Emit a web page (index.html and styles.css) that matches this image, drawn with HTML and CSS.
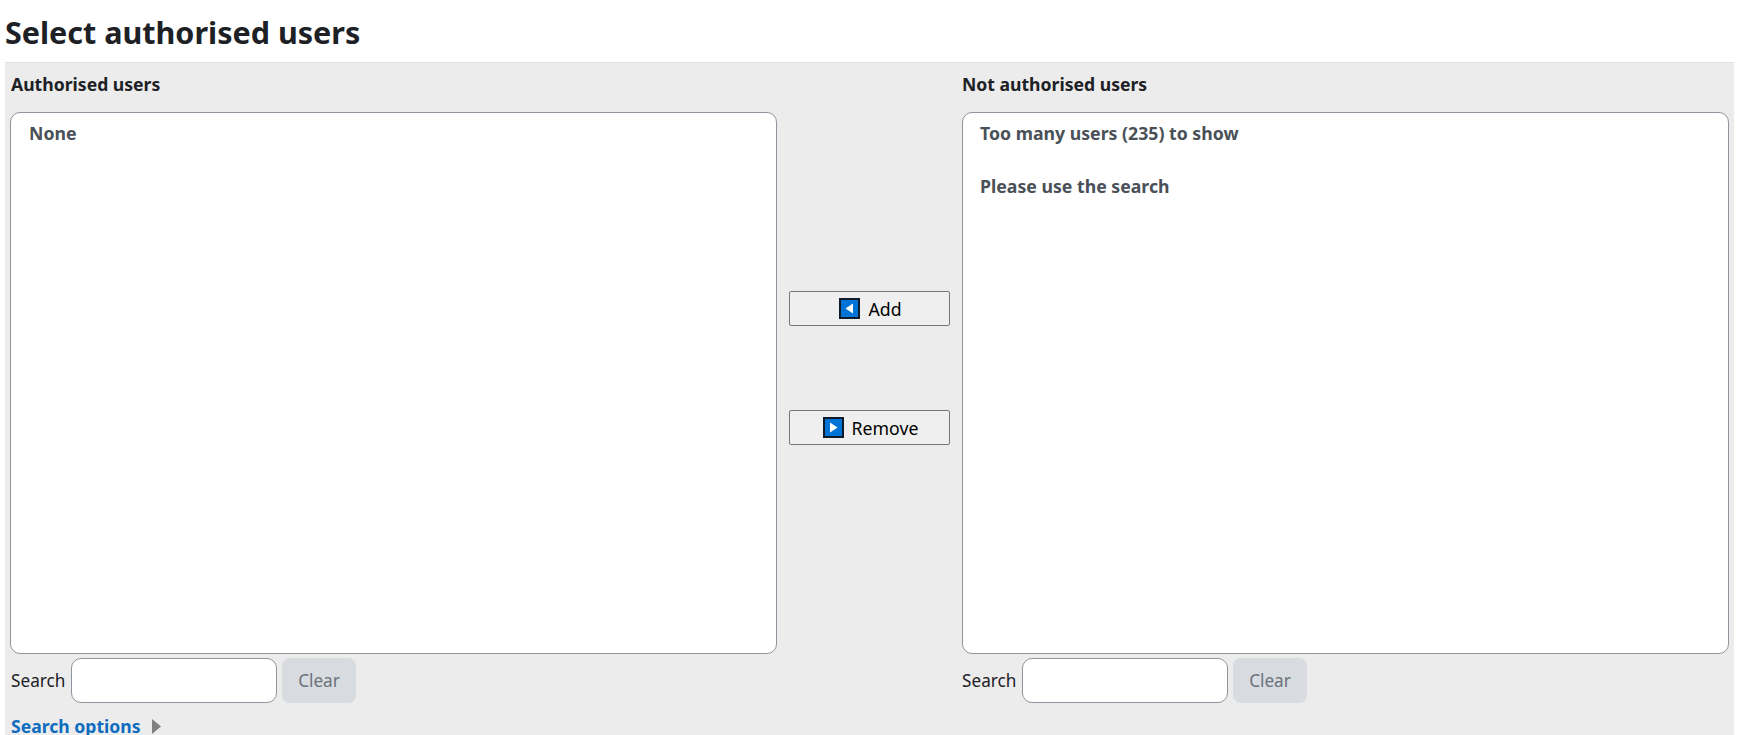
FILE: index.html
```html
<!DOCTYPE html>
<html lang="en">
<head>
<meta charset="utf-8">
<title>Select authorised users</title>
<link rel="stylesheet" href="styles.css">
</head>
<body>
<h2 class="title">Select authorised users</h2>
<form class="panel">
  <div class="selector">
    <section class="column column-left">
      <label class="list-label">Authorised users</label>
      <div class="listbox"><p class="option">None</p></div>
      <div class="search-row">
        <label class="search-label">Search</label>
        <input class="search-input" type="text">
        <button class="clear" type="button">Clear</button>
      </div>
    </section>
    <div class="actions">
      <button class="move" type="button">
        <svg class="move-icon" viewBox="0 0 21 21" aria-hidden="true"><rect x="1" y="1" width="19" height="19" fill="#0073d6" stroke="#0d1b2a" stroke-width="2"/><path d="M6.5 10.5 L14 5.5 V15.5 Z" fill="#fff"/></svg>
        <span>Add</span>
      </button>
      <button class="move" type="button">
        <svg class="move-icon" viewBox="0 0 21 21" aria-hidden="true"><rect x="1" y="1" width="19" height="19" fill="#0073d6" stroke="#0d1b2a" stroke-width="2"/><path d="M14.5 10.5 L7 5.5 V15.5 Z" fill="#fff"/></svg>
        <span>Remove</span>
      </button>
    </div>
    <section class="column">
      <label class="list-label">Not authorised users</label>
      <div class="listbox">
        <p class="option">Too many users (235) to show</p>
        <p class="option option-gap">Please use the search</p>
      </div>
      <div class="search-row">
        <label class="search-label">Search</label>
        <input class="search-input" type="text">
        <button class="clear" type="button">Clear</button>
      </div>
    </section>
  </div>
  <div class="options-row">
    <a class="options-link" href="#">Search options</a>
    <svg class="options-caret" viewBox="0 0 9 15" aria-hidden="true"><path d="M0 0 L9 7.5 L0 15 Z" fill="#808080"/></svg>
  </div>
</form>
</body>
</html>
```
FILE: styles.css
```css
* { box-sizing: border-box; }
html, body { height: 100%; }
body {
  margin: 0;
  padding: 0 5px;
  overflow: hidden;
  background: #fff;
  color: #1d2125;
  font-family: "Noto Sans", "Open Sans", sans-serif;
  font-size: 17.2px;
}
.title {
  margin: 0;
  height: 62px;
  padding-top: 10px;
  font-size: 30.5px;
  line-height: 45px;
  font-weight: 700;
}
.panel {
  height: 673px;
  padding: 0 5px;
  background: #ececec;
  border-top: 1px solid #dee2e6;
}
.selector {
  display: grid;
  grid-template-columns: 767px 185px 767px;
}
.column { display: flex; flex-direction: column; }
.list-label {
  height: 49px;
  padding-top: 9px;
  font-size: 17.6px;
  line-height: 24px;
  font-weight: 700;
}
.column-left .list-label { padding-left: 1px; }
.listbox {
  height: 542px;
  padding: 8px 17px;
  background: #fff;
  border: 1px solid #8f959e;
  border-radius: 10px;
}
.column-left .listbox { padding-left: 18px; }
.option {
  margin: 0;
  color: #495057;
  font-size: 17.7px;
  line-height: 24px;
  font-weight: 700;
}
.option-gap { margin-top: 29px; }
.search-row {
  display: flex;
  align-items: center;
  margin-top: 4px;
  height: 45px;
}
.column-left .search-row { padding-left: 1px; }
.search-label { width: 60px; }
.search-input {
  width: 206px;
  height: 45px;
  background: #fff;
  border: 1px solid #8f959e;
  border-radius: 10px;
}
.clear {
  width: 74px;
  height: 45px;
  margin-left: 5px;
  border: 0;
  border-radius: 8px;
  background: #d8dbe0;
  color: #6a737b;
  font: inherit;
}
.actions {
  display: flex;
  flex-direction: column;
  align-items: center;
  gap: 84px;
  padding-top: 228px;
}
.move {
  display: flex;
  align-items: center;
  justify-content: center;
  gap: 8px;
  width: 161px;
  height: 35px;
  padding: 0 0 0 2px;
  background: #efefef;
  border: 1px solid #767676;
  border-radius: 2px;
  color: #000;
  font: inherit;
  font-size: 17.7px;
}
.move-icon { width: 21px; height: 21px; flex: none; }
.options-row {
  display: flex;
  align-items: center;
  gap: 11px;
  margin-top: 5px;
  padding-left: 1px;
  height: 36px;
}
.options-link {
  color: #0f6cbf;
  font-weight: 700;
  font-size: 17.6px;
  text-decoration: none;
}
.options-caret { width: 9px; height: 15px; }
```
